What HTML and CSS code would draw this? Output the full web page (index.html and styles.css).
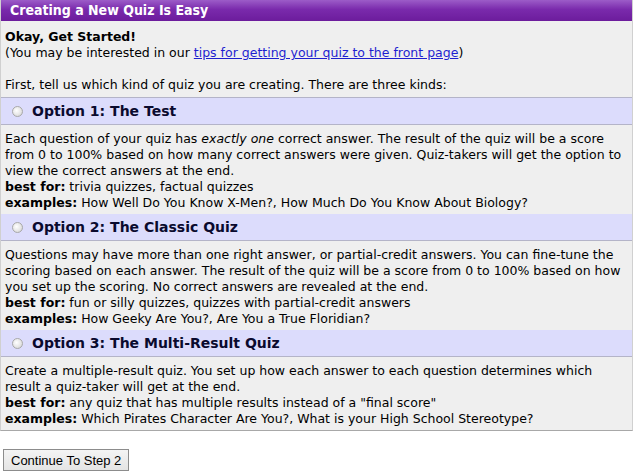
FILE: index.html
```html
<!DOCTYPE html>
<html>

<head>
	<title>Creating a New Quiz Is Easy</title>
	<link rel="stylesheet" href="styles.css">
</head>

<body>
	<form class="quiz-form">
		<div class="panel">
			<div class="panel-title">Creating a New Quiz Is Easy</div>

			<div class="intro">
				<b>Okay, Get Started!</b><br>
				(You may be interested in our <a href="#">tips for getting your quiz to the front page</a>)<br>
				<br>
				First, tell us which kind of quiz you are creating. There are three kinds:
			</div>

			<label class="option-head">
				<input type="radio" name="quiztype" value="test">
				<span>Option 1: The Test</span>
			</label>
			<div class="option-body">
				Each question of your quiz has <i>exactly one</i> correct answer. The result of the quiz will be a score from 0 to 100% based on how many correct answers were given. Quiz-takers will get the option to view the correct answers at the end.<br>
				<b>best for:</b> trivia quizzes, factual quizzes<br>
				<b>examples:</b> How Well Do You Know X-Men?, How Much Do You Know About Biology?
			</div>

			<label class="option-head">
				<input type="radio" name="quiztype" value="classic">
				<span>Option 2: The Classic Quiz</span>
			</label>
			<div class="option-body">
				Questions may have more than one right answer, or partial-credit answers. You can fine-tune the scoring based on each answer. The result of the quiz will be a score from 0 to 100% based on how you set up the scoring. No correct answers are revealed at the end.<br>
				<b>best for:</b> fun or silly quizzes, quizzes with partial-credit answers<br>
				<b>examples:</b> How Geeky Are You?, Are You a True Floridian?
			</div>

			<label class="option-head">
				<input type="radio" name="quiztype" value="multi">
				<span>Option 3: The Multi-Result Quiz</span>
			</label>
			<div class="option-body">
				Create a multiple-result quiz. You set up how each answer to each question determines which result a quiz-taker will get at the end.<br>
				<b>best for:</b> any quiz that has multiple results instead of a "final score"<br>
				<b>examples:</b> Which Pirates Character Are You?, What is your High School Stereotype?
			</div>
		</div>

		<button type="button" class="continue-btn">Continue To Step 2</button>
	</form>
</body>

</html>
```

FILE: styles.css
```css
body {
	font-family: "DejaVu Sans", Verdana, sans-serif;
	font-size: 12.5px;
	line-height: 16px;
	color: #000;
	background-color: #fff;
	margin: 0;
	padding: 0;
}

.panel {
	background-color: #efefef;
	border: 1px solid #d0d0d0;
	border-top: none;
	border-bottom-color: #a8a8a8;
}

.panel-title {
	height: 21px;
	padding: 0 9px;
	font-family: "DejaVu Sans Condensed", "DejaVu Sans", sans-serif;
	font-weight: bold;
	font-size: 14px;
	line-height: 20px;
	color: #fff;
	background: linear-gradient(#9c5cc8, #7a2aac 45%, #6c1c9c);
}

.intro {
	padding: 8px 4px 4px;
}

.intro a {
	color: #1f1fcf;
}

.option-head {
	display: flex;
	align-items: center;
	height: 26px;
	padding: 0 11px;
	gap: 9px;
	background-color: #dcdcfc;
	border-top: 1px solid #b4b4c8;
	border-bottom: 1px solid #b4b4c8;
	font-weight: bold;
	font-size: 14px;
	color: #0a0a2e;
	cursor: pointer;
}

.option-head input {
	appearance: none;
	-webkit-appearance: none;
	width: 11px;
	height: 11px;
	margin: 0;
	border: 1px solid #a9a9a9;
	border-radius: 50%;
	background: radial-gradient(circle at 40% 40%, #fff, #e4e4e4 60%, #c8c8c8);
}

.option-head input:checked {
	background: radial-gradient(circle, #555 25%, #eee 35%, #c8c8c8);
}

.option-body {
	padding: 6px 4px 3px;
}

.option-body + .option-head {
	border-top: none;
}

.continue-btn {
	margin: 18px 3px 0;
	padding: 0 7px;
	height: 22px;
	font-family: "Liberation Sans", Arial, sans-serif;
	font-size: 13px;
	color: #000;
	background: linear-gradient(#f4f4f4, #e4e4e4);
	border: 1px solid #8c8c8c;
	border-radius: 0;
	cursor: pointer;
}
```
